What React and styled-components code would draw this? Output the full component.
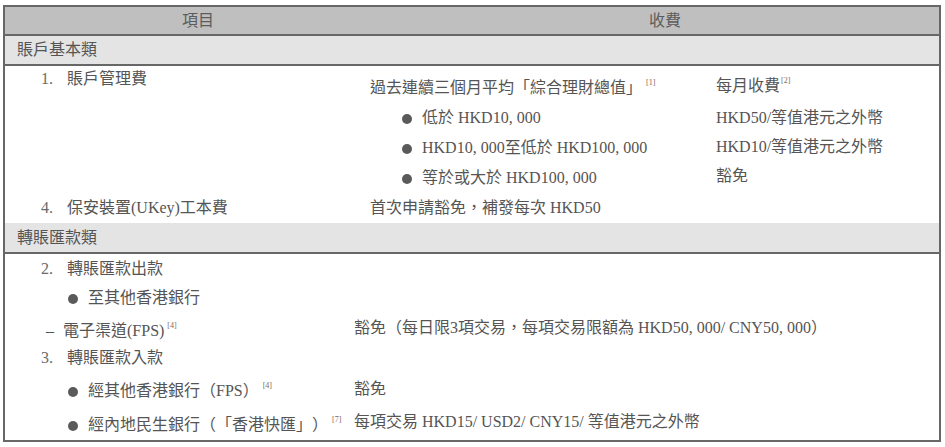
import React from "react";
import styled, { createGlobalStyle } from "styled-components";

const GlobalStyle = createGlobalStyle`
  body {
    margin: 0;
    background: #ffffff;
    font-family: "Liberation Serif", "Noto Sans CJK TC", serif;
    font-size: 16px;
    color: #555555;
    text-spacing-trim: space-all;
  }
`;

const Table = styled.div`
  box-sizing: border-box;
  width: 938px;
  margin: 5px 0 0 3px;
  border: 2px solid #676767;
`;

const HeadRow = styled.div`
  display: grid;
  grid-template-columns: 386px 1fr;
  height: 27px;
  background: #bfbfbf;
  border-bottom: 2px solid #676767;
`;

const HeadCell = styled.div`
  text-align: center;
  line-height: 27px;
  color: #5c5c5c;
`;

const SectionRow = styled.div`
  height: ${(p) => p.$h}px;
  line-height: ${(p) => p.$h}px;
  padding-left: 12px;
  background: #e4e4e4;
  border-bottom: 2px solid #676767;
`;

const Body = styled.div`
  display: grid;
  grid-template-columns: ${(p) => p.$cols};
  grid-template-rows: ${(p) => p.$rows};
`;

const Cell = styled.div`
  display: flex;
  align-items: ${(p) => p.$align || "center"};
  padding-left: ${(p) => p.$indent || 0}px;
  padding-top: ${(p) => p.$top || 0}px;
  padding-bottom: ${(p) => p.$bottom || 0}px;
  white-space: nowrap;
`;

const Text = styled.span`
  line-height: 22px;
`;

const Num = styled.span`
  display: inline-block;
  width: 26px;
  color: #6a6a6a;
`;

const Dot = styled.span`
  display: inline-block;
  width: 10px;
  height: 10px;
  margin-right: 10px;
  border-radius: 50%;
  background: #5a5a5a;
  vertical-align: -1px;
`;

const Dash = styled.span`
  display: inline-block;
  width: 17px;
`;

const Note = styled.span`
  font-size: 8px;
  margin-left: ${(p) => p.$ml || 2}px;
  vertical-align: 8px;
  color: #7a6a5a;
`;

export default function App() {
  return (
    <>
      <GlobalStyle />
      <Table>
        <HeadRow>
          <HeadCell>項目</HeadCell>
          <HeadCell>收費</HeadCell>
        </HeadRow>

        <SectionRow $h={28}>賬戶基本類</SectionRow>
        <Body $cols="365px 346px 1fr" $rows="37px 30px 30px 30px 30px">
          <Cell $align="flex-start" $indent={36} $top={2}>
            <Text>
              <Num>1.</Num>賬戶管理費
            </Text>
          </Cell>
          <Cell $align="flex-end" $bottom={4}>
            <Text>
              過去連續三個月平均「綜合理財總值」<Note $ml={4}>[1]</Note>
            </Text>
          </Cell>
          <Cell $align="flex-end" $bottom={6}>
            <Text>
              每月收費<Note $ml={1}>[2]</Note>
            </Text>
          </Cell>

          <Cell />
          <Cell $indent={32}>
            <Text>
              <Dot />低於 HKD10, 000
            </Text>
          </Cell>
          <Cell>
            <Text>HKD50/等值港元之外幣</Text>
          </Cell>

          <Cell />
          <Cell $indent={32}>
            <Text>
              <Dot />HKD10, 000至低於 HKD100, 000
            </Text>
          </Cell>
          <Cell $bottom={3}>
            <Text>HKD10/等值港元之外幣</Text>
          </Cell>

          <Cell />
          <Cell $indent={32}>
            <Text>
              <Dot />等於或大於 HKD100, 000
            </Text>
          </Cell>
          <Cell $bottom={5}>
            <Text>豁免</Text>
          </Cell>

          <Cell $indent={36}>
            <Text>
              <Num>4.</Num>保安裝置(UKey)工本費
            </Text>
          </Cell>
          <Cell>
            <Text>首次申請豁免，補發每次 HKD50</Text>
          </Cell>
          <Cell />
        </Body>

        <SectionRow $h={29}>轉賬匯款類</SectionRow>
        <Body $cols="349px 1fr" $rows="29px 30px 30px 30px 31px 36px">
          <Cell $indent={36}>
            <Text>
              <Num>2.</Num>轉賬匯款出款
            </Text>
          </Cell>
          <Cell />

          <Cell $indent={63}>
            <Text>
              <Dot />至其他香港銀行
            </Text>
          </Cell>
          <Cell />

          <Cell $indent={41}>
            <Text>
              <Dash>–</Dash>電子渠道(FPS)<Note $ml={3}>[4]</Note>
            </Text>
          </Cell>
          <Cell>
            <Text>豁免（每日限3項交易，每項交易限額為 HKD50, 000/ CNY50, 000）</Text>
          </Cell>

          <Cell $indent={36}>
            <Text>
              <Num>3.</Num>轉賬匯款入款
            </Text>
          </Cell>
          <Cell />

          <Cell $indent={63}>
            <Text>
              <Dot />經其他香港銀行（FPS）<Note $ml={4}>[4]</Note>
            </Text>
          </Cell>
          <Cell>
            <Text>豁免</Text>
          </Cell>

          <Cell $indent={63}>
            <Text>
              <Dot />經內地民生銀行（「香港快匯」）<Note $ml={4}>[7]</Note>
            </Text>
          </Cell>
          <Cell>
            <Text>每項交易 HKD15/ USD2/ CNY15/ 等值港元之外幣</Text>
          </Cell>
        </Body>
      </Table>
    </>
  );
}
